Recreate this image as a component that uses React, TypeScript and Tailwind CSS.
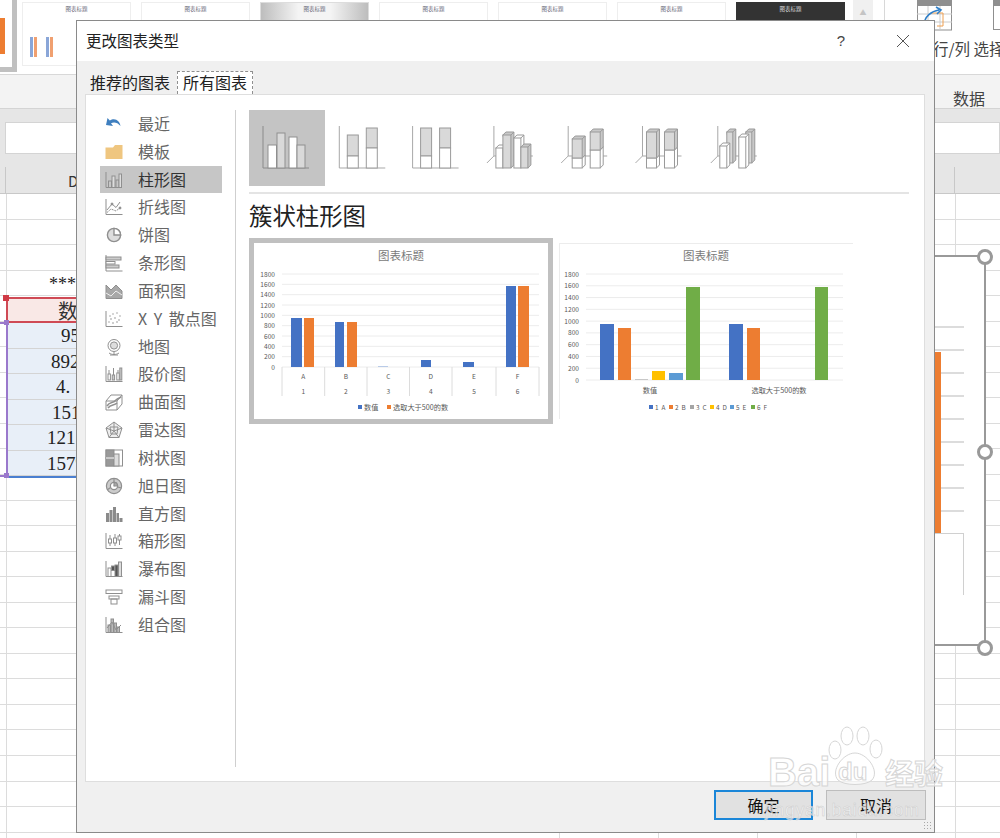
import React from "react";

const FONT = '"Noto Sans CJK SC", "Liberation Sans", sans-serif';
const S = "#8f8f8f";

const icons: Record<string, React.ReactNode> = {
  最近: <path d="M2.5 3 L1 10 L8 11 L6 8.3 C9 6.8 12.5 7.5 15.5 11 C15 5.5 9.5 2 4.8 5.6 Z" fill="#3f7fbf" stroke="none" />,
  模板: <path d="M0.5 4.5 L0.5 16 L17.5 16 L17.5 2 L10 2 L8 4.5 Z" fill="#efc680" stroke="none" />,
  柱形图: (<g fill="none" stroke={S}><path d="M1 1 V16.5 H17" /><rect x="3.5" y="10" width="3" height="6.5" /><rect x="7" y="5" width="3" height="11.5" fill="#ddd" /><rect x="11" y="9" width="3" height="7.5" /><rect x="14" y="3" width="2.5" height="13.5" fill="#ddd" /></g>),
  折线图: (<g fill="none" stroke={S}><path d="M1 1 V16.5 H17.5" /><path d="M2 12 L7 6 L11 9.5 L15 4" /><path d="M2 14.5 L6 11 L11 13 L16 9" strokeDasharray="2 1" /><circle cx="7" cy="6" r="1" fill={S} /><circle cx="15" cy="10" r="1" fill={S} /></g>),
  饼图: (<g fill="none" stroke={S} strokeWidth="1.4"><circle cx="9" cy="9" r="6.6" fill="#ddd" /><path d="M9 9 V2.4 A6.6 6.6 0 0 1 15.6 9 Z" fill="#fff" /></g>),
  条形图: (<g fill="none" stroke={S}><path d="M1 1 V17 H17.5" /><rect x="1" y="3" width="15" height="3" fill="#ccc" /><rect x="1" y="7.5" width="9" height="2.5" fill="#fff" /><rect x="1" y="11" width="13" height="3" fill="#ccc" /></g>),
  面积图: (<g stroke={S}><path d="M1 3 L6 8 L11 3 L17 9 V16.5 H1 Z" fill="#a8a8a8" /><path d="M1 11 L6 14 L11 9 L17 13" fill="none" stroke="#eee" /></g>),
  "X Y 散点图": (<g fill={S}><path d="M1 1 V16.5 H17.5" fill="none" stroke={S} /><circle cx="5" cy="6" r=".7" /><circle cx="8" cy="4" r=".7" /><circle cx="12" cy="3" r=".7" /><circle cx="15" cy="6" r=".7" /><circle cx="6" cy="9" r=".8" /><circle cx="10" cy="8" r=".8" /><circle cx="14" cy="10" r=".8" /><circle cx="4" cy="12" r=".7" /><circle cx="8" cy="13" r=".8" /><circle cx="12" cy="12" r=".8" /></g>),
  地图: (<g fill="none" stroke={S}><circle cx="9" cy="7.5" r="6" /><circle cx="9" cy="7.5" r="3.6" fill="#ddd" /><path d="M4 15 C7 17 11 17 14 15 M9 14 V16.5 M5 17 H13" /></g>),
  股价图: (<g fill="none" stroke={S}><path d="M1 1 V16.5 H17.5" /><path d="M4 5 V15 M8.5 3 V15 M13 5 V15" /><rect x="3" y="9" width="2.4" height="6" fill="#fff" /><rect x="7.2" y="10" width="2.4" height="5" fill="#ccc" /><rect x="11.8" y="8" width="2.4" height="7" fill="#fff" /><rect x="14.8" y="3" width="2" height="12" fill="#ccc" /></g>),
  曲面图: (<g fill="none" stroke={S}><path d="M1 8 L6 2 H17 V11 L12 17 H1 Z" /><path d="M1 8 H12 V17 M12 8 L17 2" /><path d="M2 13 C5 8 8 11 11 7 C13 5 15 5 16 4 M3 15 C6 11 9 13 12 10" strokeWidth="1.6" /></g>),
  雷达图: (<g fill="none" stroke={S}><path d="M9 1 L17 7 L14 16.5 H4 L1 7 Z" fill="#eee" /><path d="M9 1 V10 M17 7 L9 10 M14 16.5 L9 10 M4 16.5 L9 10 M1 7 L9 10 M5 6 L13 6 L12 13 L6 13 Z" /></g>),
  树状图: (<g stroke={S}><rect x="1" y="1" width="16.5" height="16" fill="#fff" /><rect x="1" y="1" width="8" height="8" fill="#999" /><rect x="1" y="9" width="8" height="8" fill="#999" /><rect x="9" y="5" width="5" height="12" fill="#ddd" /><path d="M1 9 H9" stroke="#fff" /></g>),
  旭日图: (<g fill="none" stroke={S} strokeWidth="1.2"><circle cx="9" cy="9" r="7.6" fill="#ccc" /><circle cx="9" cy="9" r="3.6" fill="#fff" /><path d="M9 5.4 V1.4 M9 9 L12 5.6 M5.6 10.5 L2 13 M12.5 10 L16.5 11" /><path d="M9 9 L9 5.4 A3.6 3.6 0 0 1 12.6 9 Z" fill="#aaa" /></g>),
  直方图: (<g fill="#8a8a8a" stroke="none"><rect x="1" y="8" width="3" height="9" /><rect x="4.5" y="5" width="3" height="12" /><rect x="8" y="2" width="3" height="15" /><rect x="11.5" y="8" width="2.5" height="9" /><rect x="14.5" y="13" width="3" height="4" /></g>),
  箱形图: (<g fill="none" stroke={S}><path d="M1 1 V16.5 H17.5 M5 3 V14 M10 2 V14 M14.5 2 V13" /><rect x="3.5" y="7" width="3" height="4" fill="#fff" /><rect x="8.5" y="6" width="3" height="5" fill="#fff" /><rect x="13" y="4" width="3" height="4" fill="#fff" /></g>),
  瀑布图: (<g fill="none" stroke={S}><path d="M1 1 V16.5 H17.5" /><rect x="3" y="8" width="3" height="8.5" /><rect x="6.5" y="6" width="3" height="4.5" fill="#555" /><rect x="10" y="5" width="3" height="11.5" fill="#555" /><rect x="13.5" y="2" width="3" height="14.5" fill="#ddd" /></g>),
  漏斗图: (<g fill="none" stroke={S}><rect x="1" y="2" width="16" height="3.5" /><rect x="4" y="8" width="10" height="3" /><rect x="6" y="11" width="6" height="5" /></g>),
  组合图: (<g fill="none" stroke={S}><path d="M1 1 V16.5 H17.5" /><rect x="3" y="9" width="2.5" height="7.5" fill="#bbb" /><rect x="6" y="3" width="2.5" height="13.5" fill="#bbb" /><rect x="9" y="7" width="2.5" height="9.5" fill="#bbb" /><rect x="12" y="11" width="2.5" height="5.5" fill="#bbb" /><path d="M2 12 L7 6 L11 14 L16 9" /></g>),
};

const names = Object.keys(icons);

function Box({ x, y, w, h, fill, d = 3 }: { x: number; y: number; w: number; h: number; fill: string; d?: number }) {
  return (
    <g stroke="#9a9a9a" strokeWidth="1">
      <path d={`M${x} ${y} l${d} -${d} h${w} v${h} l-${d} ${d} Z`} fill={fill === "#fff" ? "#fff" : "#c8c8c8"} />
      <rect x={x} y={y} width={w} height={h} fill={fill} />
      <path d={`M${x + w} ${y} l${d} -${d}`} />
    </g>
  );
}

function Axis3D({ x }: { x: number }) {
  return <path d={`M${x} 126 V156 H${x + 39} M${x} 156 L${x - 7} 163`} fill="none" stroke="#a8a8a8" />;
}

function Subtypes() {
  const b = "#9a9a9a";
  const g = "#d9d9d9";
  const two = (x: number, xs: [number, number, number, number][], w: number) => (
    <g>
      <path d={`M${x} 126 V168 H${x + 46}`} fill="none" stroke="#a8a8a8" />
      {xs.map(([bx, t, s, e], i) => (
        <g key={i} stroke={b}>
          <rect x={bx} y={t} width={w} height={s - t} fill={g} />
          <rect x={bx} y={s} width={w} height={e - s} fill="#fff" />
        </g>
      ))}
    </g>
  );
  const items: React.ReactNode[] = [
    <g>
      <path d="M263 126 V168 H309" fill="none" stroke="#8a8a8a" />
      <g stroke="#8f8f8f">
        <rect x="268" y="145" width="8.5" height="23" fill="#fff" />
        <rect x="277" y="133" width="8" height="35" fill={g} />
        <rect x="289" y="137" width="8" height="31" fill="#fff" />
        <rect x="297" y="145" width="8" height="23" fill={g} />
      </g>
    </g>,
    two(339, [[347, 135, 156, 168], [366, 128, 148, 168]], 11),
    two(413, [[421, 128, 156, 168], [440, 128, 148, 168]], 11),
    <g>
      <Axis3D x={494} />
      <Box x={496} y={148} w={7} h={20} fill="#fff" />
      <Box x={503} y={135} w={8} h={33} fill={g} />
      <Box x={514} y={138} w={7} h={30} fill="#fff" />
      <Box x={521} y={147} w={7} h={21} fill={g} />
    </g>,
    <g>
      <Axis3D x={568} />
      <Box x={572} y={158} w={10} h={10} fill="#fff" />
      <Box x={572} y={139} w={10} h={19} fill={g} />
      <Box x={590} y={150} w={10} h={18} fill="#fff" />
      <Box x={590} y={132} w={10} h={18} fill={g} />
    </g>,
    <g>
      <Axis3D x={643} />
      <Box x={647} y={158} w={10} h={10} fill="#fff" />
      <Box x={647} y={132} w={10} h={26} fill={g} />
      <Box x={665} y={150} w={10} h={18} fill="#fff" />
      <Box x={665} y={132} w={10} h={18} fill={g} />
    </g>,
    <g>
      <Axis3D x={718} />
      <Box x={727} y={132} w={6} h={31} fill={g} />
      <Box x={746} y={132} w={6} h={31} fill={g} />
      <Box x={720} y={146} w={7} h={22} fill="#fff" />
      <Box x={739} y={137} w={7} h={31} fill="#fff" />
    </g>,
  ];
  return (
    <div className="flex">
      {items.map((it, i) => (
        <div key={i} className={`h-[76px] ${i === 0 ? "w-[76px] bg-[#c4c4c4]" : "w-[74.7px]"} ${i === 1 ? "-ml-[1.3px]" : ""}`}>
          <svg width={i === 0 ? 76 : 74.7} height="76" viewBox={`${249 + i * 74.7} 110 ${i === 0 ? 76 : 74.7} 76`}>{it}</svg>
        </div>
      ))}
    </div>
  );
}

const ticks = ["1800", "1600", "1400", "1200", "1000", "800", "600", "400", "200", "0"];
const BLUE = "#4472c4";
const ORANGE = "#ed7d31";

function Chart1() {
  const yAt = (i: number) => 274 + (i * (367 - 274)) / 9;
  const bars: [number, number, number, string][] = [
    [291, 302, 318, BLUE], [304, 314, 318, ORANGE], [335, 344, 322, BLUE], [347, 357, 322, ORANGE],
    [378, 388, 366, "#b9cbe8"], [421, 431, 360, BLUE], [463, 474, 362, BLUE], [506, 516, 286, BLUE], [518, 529, 286, ORANGE],
  ];
  const cols = [282, 324.7, 367, 409.5, 452, 496, 539];
  return (
    <div className="w-[304px] h-[186px] border-[5px] border-[#c0c0c0] bg-white">
      <svg width="294" height="176" viewBox="254 243 294 176" fontFamily={FONT}>
        <text x="401" y="260" fontSize="11.5" fill="#7a7a7a" textAnchor="middle">图表标题</text>
        {ticks.map((t, i) => (
          <g key={t}>
            <path d={`M282 ${yAt(i)} H539`} stroke="#ececec" />
            <text x="275" y={yAt(i) + 2.5} fontSize="6.6" fill="#595959" textAnchor="end">{t}</text>
          </g>
        ))}
        {bars.map(([a, b, t, c], i) => <rect key={i} x={a} y={t} width={b - a} height={367 - t} fill={c} />)}
        {cols.map((c) => <path key={c} d={`M${c} 367 V396`} stroke="#dcdcdc" />)}
        {"ABCDEF".split("").map((l, i) => (
          <g key={l} fontSize="6.6" fill="#595959" textAnchor="middle">
            <text x={(cols[i] + cols[i + 1]) / 2} y="379">{l}</text>
            <text x={(cols[i] + cols[i + 1]) / 2} y="394">{i + 1}</text>
          </g>
        ))}
        <rect x="358" y="405" width="4" height="4" fill={BLUE} />
        <text x="364" y="409.5" fontSize="7.2" fill="#595959">数值</text>
        <rect x="387" y="405" width="4" height="4" fill={ORANGE} />
        <text x="393" y="409.5" fontSize="7.2" fill="#595959">选取大于500的数</text>
      </svg>
    </div>
  );
}

function Chart2() {
  const yAt = (i: number) => 274 + (i * (380 - 274)) / 9;
  const bars: [number, number, number, string][] = [
    [600, 614, 324, BLUE], [618, 631, 328, ORANGE], [635, 648, 379, "#c8c8c8"], [652, 665, 371, "#ffc000"], [669, 683, 373, "#5b9bd5"], [686, 700, 287, "#70ad47"],
    [729, 743, 324, BLUE], [747, 760, 328, ORANGE], [815, 828, 287, "#70ad47"],
  ];
  const legend: [number, string, string][] = [
    [649, "#4472c4", "1 A"], [669, "#ed7d31", "2 B"], [690, "#a5a5a5", "3 C"], [710, "#ffc000", "4 D"], [730, "#5b9bd5", "5 E"], [751, "#70ad47", "6 F"],
  ];
  return (
    <div className="w-[294px] h-[176px] mt-[5px] ml-[6px] border-l border-t border-[#ececec] bg-white">
      <svg width="293" height="175" viewBox="560 244 293 175" fontFamily={FONT}>
        <text x="706" y="260" fontSize="11.5" fill="#7a7a7a" textAnchor="middle">图表标题</text>
        {ticks.map((t, i) => (
          <g key={t}>
            <path d={`M586 ${yAt(i)} H843`} stroke="#ececec" />
            <text x="579" y={yAt(i) + 2.5} fontSize="6.6" fill="#595959" textAnchor="end">{t}</text>
          </g>
        ))}
        {bars.map(([a, b, t, c], i) => <rect key={i} x={a} y={t} width={b - a} height={380 - t} fill={c} />)}
        <text x="650" y="393" fontSize="7.2" fill="#595959" textAnchor="middle">数值</text>
        <text x="779" y="393" fontSize="7.2" fill="#595959" textAnchor="middle">选取大于500的数</text>
        {legend.map(([x, c, l]) => (
          <g key={l}>
            <rect x={x} y="405" width="4" height="4" fill={c} />
            <text x={x + 6} y="409.5" fontSize="6.4" fill="#595959" letterSpacing="0.8">{l}</text>
          </g>
        ))}
      </svg>
    </div>
  );
}

function Thumb({ dark, grad }: { dark?: boolean; grad?: boolean }) {
  return (
    <div className={`w-[109px] h-[66px] shrink-0 flex flex-col items-center pt-[2px] border ${dark ? "bg-[#333333] border-[#333333]" : grad ? "bg-[linear-gradient(90deg,#bdbdbd,#f4f4f4_35%,#f4f4f4_65%,#bdbdbd)] border-[#dddddd]" : "bg-white border-[#eeeeee]"}`}>
      <span className={`text-[5.5px] leading-[8px] ${dark ? "text-[#dddddd]" : "text-[#667]"}`}>图表标题</span>
    </div>
  );
}

const rows = Array.from({ length: 25 });

function Sheet() {
  return (
    <div className="absolute inset-0 overflow-hidden bg-white">
      {/* ribbon */}
      <div className="h-[75px] bg-white border-b border-[#d8d8d8] flex items-start overflow-hidden">
        <div className="w-[17px] h-[72px] shrink-0 border-r-[5px] border-b-[5px] border-[#c0c0c0] flex justify-start items-start pt-[18px]">
          <div className="w-[5px] h-[36px] bg-[#ed7d31]" />
        </div>
        <div className="flex gap-[10px] pt-[2px] pl-[5px] shrink-0">
          <div className="w-[109px] h-[64px] shrink-0 border border-[#eeeeee] flex flex-col items-center pt-[2px]">
            <span className="text-[5.5px] leading-[8px] text-[#667]">图表标题</span>
            <div className="flex gap-[9px] mt-[24px] self-start ml-[7px] items-start">
              <div className="flex gap-[1px]"><div className="w-[3px] h-[20px] bg-[#8aa6d8]" /><div className="w-[3px] h-[20px] bg-[#f0a070]" /></div>
              <div className="flex gap-[1px]"><div className="w-[3px] h-[20px] bg-[#8aa6d8]" /><div className="w-[3px] h-[20px] bg-[#f0a070]" /></div>
            </div>
          </div>
          <Thumb /><Thumb grad /><Thumb /><Thumb /><Thumb /><Thumb dark />
        </div>
        <div className="ml-[8px] w-[20px] h-[75px] bg-[#f0f0f0] shrink-0 flex justify-center pt-[7px] text-[#c4c4c4] text-[7px]">▲</div>
        <div className="w-[12px] h-[75px] border-r border-[#d8d8d8] shrink-0" />
        <svg width="36" height="32" viewBox="0 0 36 32" className="shrink-0 ml-[32px]">
          <rect x=".5" y="0" width="34" height="30" fill="#fff" stroke="#8f8f8f" />
          <rect x="0" y="0" width="35" height="6" fill="#8f8f8f" />
          <path d="M0 14 H35 M0 22 H35 M11 6 V30 M23 6 V30" stroke="#cccccc" />
          <path d="M14 13 H26 V26 H20" fill="none" stroke="#f0a050" />
          <path d="M7 26 C7 16 15 11 22 10 M19 7 L24 10 L20 14" fill="none" stroke="#2f7fc8" strokeWidth="1.6" />
        </svg>
        <div className="shrink-0 ml-[40px] w-[34px] h-[30px] border border-[#8f8f8f]"><div className="h-[5px] bg-[#8f8f8f]" /></div>
      </div>
      <div className="h-[34px] bg-[#f3f3f3] border-b border-[#d4d4d4] flex justify-end items-start pt-[11px] pr-[15px] text-[16px] leading-[24px] text-[#444444]">
        数据
      </div>
      {/* formula bar */}
      <div className="h-[58px] bg-[#e6e6e6] flex items-center">
        <div className="ml-[5px] w-[995px] h-[32px] bg-white border border-[#d4d4d4]" />
      </div>
      {/* column header */}
      <div className="h-[27px] bg-[#e6e6e6] border-b border-[#c8c8c8] flex">
        <div className="w-[6px] border-r border-[#c8c8c8]" />
        <div className="w-[949px] border-r border-[#c8c8c8] pl-[62px] text-[15px] text-[#333333] leading-[28px]">D</div>
      </div>
      {/* cells */}
      <div className="relative h-[700px]">
        {rows.map((_, i) => <div key={i} className="h-[25.55px] border-b border-[#dcdcdc]" />)}
        {[6, 559, 658, 757, 856, 955].map((x) => (
          <div key={x} className="absolute top-0 bottom-0 w-px bg-[#dcdcdc]" style={{ left: x }} />
        ))}
        <div className="absolute left-[6px] top-[103px] w-[100px]" style={{ fontFamily: '"Liberation Serif", "Noto Sans CJK SC", serif' }}>
          <div className="h-[25px] text-[18px] leading-[25px] pl-[43px] text-[#222222] -mt-[25px]">*****</div>
          <div className="h-[26px] bg-[#f9e8e6] border-y-2 border-l-2 border-[#cf4a55] pl-[50px] text-[20px] leading-[24px] text-[#333333]" style={{ fontFamily: FONT }}>数值</div>
          <div className="bg-[#e8eff8] border-l-2 border-[#9a78cc] border-b-2 border-b-[#4a7fd0]">
            {[["53px", "956"], ["43px", "892"], ["48px", "4."], ["44px", "1517"], ["39px", "1215"], ["39px", "1579"]].map(([p, t]) => (
              <div key={t} className="h-[25.5px] border-b border-[#d4d4d4] text-[19px] leading-[25px] text-[#222222]" style={{ paddingLeft: p }}>{t}</div>
            ))}
          </div>
          <div className="absolute -left-[6px] top-[25px] w-[6px] h-[2px] bg-[#9a78cc]" />
          <div className="absolute -left-[6px] top-[178px] w-[6px] h-[2px] bg-[#9a78cc]" />
          <div className="absolute -left-[3px] top-[-2px] w-[6px] h-[6px] bg-[#cf3a45]" />
          <div className="absolute -left-[2px] top-[23px] w-[5px] h-[5px] bg-[#9a78cc]" />
          <div className="absolute -left-[2px] top-[176px] w-[5px] h-[5px] bg-[#9a78cc]" />
        </div>
        {/* chart frame at right */}
        <div className="absolute left-[920px] top-[61px] w-[66px] h-[391px] bg-white border-2 border-l-0 border-[#999999] flex flex-col">
          <div className="h-[69px]" />
          {[0, 1, 2, 3, 4, 5, 6, 7, 8].map((i) => <div key={i} className="h-[23px] w-[44px] border-t-2 border-[#dcdcdc]" />)}
          <div className="w-[44px] h-[62px] border-t border-r border-[#d0d0d0]" />
          <div className="absolute left-0 top-[95px] w-[21px] h-[181px] bg-[#ed7d31]" />
          {[-8, 187, 383].map((t) => (
            <div key={t} className="absolute -right-[9px] w-[16px] h-[16px] rounded-full bg-white border-[3px] border-[#999999]" style={{ top: t }} />
          ))}
        </div>
      </div>
    </div>
  );
}

function Dialog() {
  return (
    <div className="absolute left-[76px] top-[20px] w-[859px] h-[813px] border border-[#8a8a8a] bg-[#f0f0f0] flex flex-col z-10">
      <div className="h-[40px] bg-white flex items-center shrink-0">
        <span className="ml-[9px] text-[15.5px] text-[#222222]">更改图表类型</span>
        <span className="ml-auto mr-[51px] text-[15px] text-[#444444]" style={{ fontFamily: '"Liberation Sans", sans-serif' }}>?</span>
        <svg width="14" height="14" viewBox="0 0 14 14" className="mr-[24px]"><path d="M1 1 L13 13 M13 1 L1 13" stroke="#555555" strokeWidth="1" fill="none" /></svg>
      </div>
      <div className="h-[33px] flex items-end pl-[9px] shrink-0">
        <div className="w-[91px] h-[23px] text-[16px] leading-[23px] text-[#222222] pl-[4px]">推荐的图表</div>
        <div className="w-[76px] h-[23px] bg-white border border-dashed border-b-0 border-[#8f8f8f] text-[16px] leading-[21px] text-[#222222] text-center">所有图表</div>
      </div>
      <div className="h-[688px] ml-[8px] mr-[9px] bg-white border border-[#dedede] flex shrink-0">
        <div className="w-[150px] shrink-0 mt-[15px] mb-[14px] border-r border-[#cfcfcf] pl-[14px]">
          {names.map((n) => (
            <div key={n} className={`w-[122px] h-[27.83px] flex items-center ${n === "柱形图" ? "bg-[#c6c6c6]" : ""}`}>
              <svg width="18" height="18" viewBox="0 0 18 18" className="ml-[5px] shrink-0">{icons[n]}</svg>
              <span className={`ml-[15px] pb-[2px] text-[16px] leading-[24px] whitespace-nowrap [word-spacing:3px] ${n === "柱形图" ? "text-[#333333]" : "text-[#666666]"}`}>{n}</span>
            </div>
          ))}
        </div>
        <div className="flex-1 pl-[13px] pr-[15px] pt-[15px]">
          <Subtypes />
          <div className="mt-[6px] border-t-2 border-[#e4e4e4]" />
          <div className="mt-[3px] h-[36px] text-[23.4px] leading-[36px] text-[#222222]">簇状柱形图</div>
          <div className="flex mt-[5px] items-start">
            <Chart1 />
            <Chart2 />
          </div>
        </div>
      </div>
      <div className="flex-1 flex justify-end items-start pt-[8px] pr-[8px] gap-[13px] relative">
        <div className="w-[99px] h-[30px] bg-[#e1e1e1] border-2 border-[#1a86d8] text-[16px] leading-[26px] text-center text-[#111111]">确定</div>
        <div className="w-[100px] h-[30px] bg-[#e1e1e1] border border-[#bdbdbd] text-[16px] leading-[28px] text-center text-[#111111]">取消</div>
        <div className="absolute right-[2px] bottom-[2px] w-[9px] h-[9px] bg-[radial-gradient(circle,#a8a8a8_1px,transparent_1px)] bg-[length:3px_3px]" />
      </div>
    </div>
  );
}

function Watermark() {
  return (
    <div className="absolute left-[760px] top-[724px] w-[240px] h-[100px] z-20 pointer-events-none">
      <svg width="70" height="62" viewBox="0 0 70 62" className="absolute left-[60px] top-[2px]" fill="#ffffff" fillOpacity=".55" stroke="#d6d6d6">
        <ellipse cx="15" cy="24" rx="6" ry="9" />
        <ellipse cx="27" cy="10" rx="6" ry="9" />
        <ellipse cx="43" cy="10" rx="6" ry="9" />
        <ellipse cx="56" cy="23" rx="6" ry="9" />
        <path d="M35 27 C47 27 60 45 52 54 C46 60 24 60 18 54 C10 45 23 27 35 27 Z" />
      </svg>
      <span className="absolute left-[8px] top-[28px] text-[40px] leading-[40px] font-bold text-white/70 [-webkit-text-stroke:1px_#d6d6d6]" style={{ fontFamily: '"Liberation Sans", sans-serif' }}>Bai</span>
      <span className="absolute left-[78px] top-[34px] text-[24px] leading-[28px] font-bold text-white/60 [-webkit-text-stroke:1px_#d6d6d6]" style={{ fontFamily: '"Liberation Sans", sans-serif' }}>du</span>
      <span className="absolute left-[125px] top-[30px] text-[29px] leading-[36px] font-bold text-white/70 [-webkit-text-stroke:1px_#d6d6d6]">经验</span>
      <span className="absolute left-[5px] top-[74px] text-[17.5px] leading-[24px] tracking-[0.8px] text-white/60 [-webkit-text-stroke:0.5px_#cccccc]" style={{ fontFamily: '"Liberation Sans", sans-serif' }}>jingyan.baidu.com</span>
    </div>
  );
}

export default function App() {
  return (
    <div className="relative w-[1000px] h-[838px] overflow-hidden" style={{ fontFamily: FONT }}>
      <Sheet />
      <div className="absolute left-[933px] top-[36px] z-[5] text-[15.5px] leading-[24px] text-[#444444] whitespace-nowrap">行/列 选择</div>
      <Dialog />
      <Watermark />
    </div>
  );
}
